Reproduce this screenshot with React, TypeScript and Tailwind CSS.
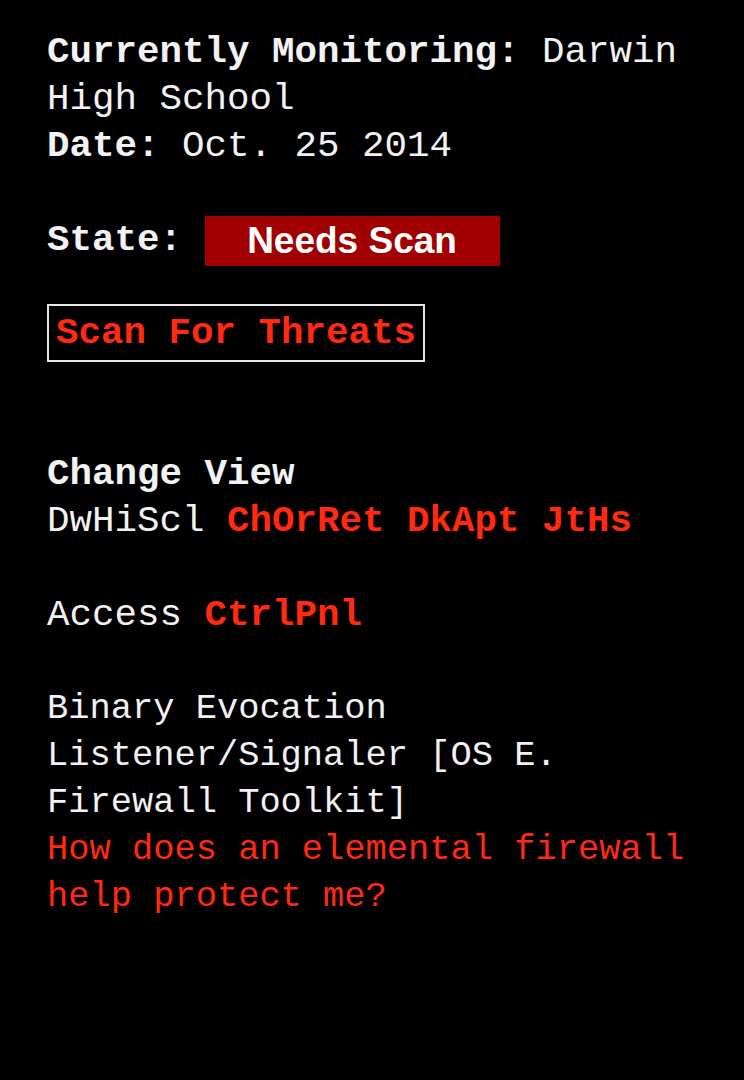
export default function App() {
	return (
		<div className="min-h-[1080px] w-full bg-black pl-[47px] pr-[10px] pt-[29px] text-[37.5px] leading-[47px] text-[#f2f2f2] font-['Liberation_Mono','Courier_New',monospace]">
			<p>
				<b>Currently Monitoring:</b> Darwin High School
			</p>
			<p>
				<b>Date:</b> Oct. 25 2014
			</p>
			<div className="h-[47px]" />
			<div className="flex items-center h-[47px]">
				<b className="whitespace-pre">State: </b>
				<span className="inline-flex items-center justify-center w-[295px] h-[50px] bg-[#a00000] text-white text-[37px] font-bold font-['Liberation_Sans',Arial,sans-serif]">
					Needs Scan
				</span>
			</div>
			<button className="block mt-[40px] h-[58px] border-2 border-[#e6e6e6] px-[7px] font-bold text-[#ff2a10] leading-[47px]">
				Scan For Threats
			</button>
			<div className="h-[89px]" />
			<p className="font-bold">Change View</p>
			<p>
				DwHiScl{" "}
				<span className="font-bold text-[#ff2a10]">ChOrRet DkApt JtHs</span>
			</p>
			<div className="h-[47px]" />
			<p>
				Access <span className="font-bold text-[#ff2a10]">CtrlPnl</span>
			</p>
			<div className="h-[47px]" />
			<div className="text-[35.4px]">
				<p>Binary Evocation</p>
				<p>Listener/Signaler [OS E. Firewall Toolkit]</p>
				<p className="text-[#ff2a10]">How does an elemental firewall help protect me?</p>
			</div>
		</div>
	);
}
